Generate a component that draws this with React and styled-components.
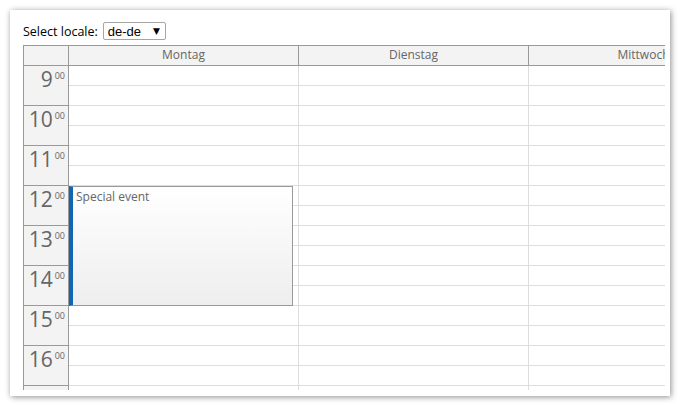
import React, {useState} from 'react'
import styled, {createGlobalStyle} from 'styled-components'

const GlobalStyle = createGlobalStyle`
  * { box-sizing: border-box; }
  body {
    margin: 0;
    background: #fff;
    font-family: "Open Sans", "DejaVu Sans", sans-serif;
  }
`;

const Panel = styled.div`
  margin: 10px;
  width: 660px;
  height: 386px;
  background: #fff;
  box-shadow: 1px 1px 6px rgba(0,0,0,0.45);
  padding: 12px 5px 6px 13px;
  display: flex;
  flex-direction: column;
`;

const Toolbar = styled.div`
  display: flex;
  align-items: center;
  height: 18px;
  margin-bottom: 5px;
  gap: 5px;
  font-size: 12.5px;
  color: #000;
`;

const SelectWrap = styled.div`
  position: relative;
  width: 63px;
  height: 18px;
`;

const Select = styled.select`
  appearance: none;
  width: 100%;
  height: 100%;
  border: 1px solid #a6a6a6;
  border-radius: 2px;
  background: #fff;
  padding: 0 0 0 4px;
  font-family: "Liberation Sans", Arial, sans-serif;
  font-size: 13px;
  color: #000;
  outline: none;
`;

const Arrow = styled.span`
  position: absolute;
  right: 6px;
  top: 3px;
  font-size: 9px;
  line-height: 12px;
  color: #000;
  pointer-events: none;
  font-family: "DejaVu Sans", sans-serif;
`;

const Calendar = styled.div`
  flex: 1;
  overflow: hidden;
  border-left: 1px solid #999;
  border-top: 1px solid #999;
  color: #666;
`;

const Inner = styled.div`
  width: ${props => 45 + props.days * 230}px;
`;

const HeaderRow = styled.div`
  display: flex;
  height: 20px;
`;

const Corner = styled.div`
  width: 45px;
  background: #f3f3f3;
  border-right: 1px solid #999;
  border-bottom: 1px solid #999;
`;

const DayHeader = styled.div`
  width: 230px;
  background: #f3f3f3;
  border-right: 1px solid #999;
  border-bottom: 1px solid #999;
  font-size: 12px;
  line-height: 18px;
  text-align: center;
`;

const Body = styled.div`
  display: flex;
`;

const RowHeaders = styled.div`
  width: 45px;
  background: #f3f3f3;
  border-right: 1px solid #999;
`;

const HourCell = styled.div`
  height: 40px;
  border-bottom: 1px solid #999;
  display: flex;
  justify-content: flex-end;
  padding: 2px 3px 0 0;
`;

const HourNum = styled.span`
  font-size: 21px;
  line-height: 22px;
  color: #666;
`;

const HourMin = styled.span`
  font-size: 9px;
  line-height: 11px;
  margin-left: 2px;
  margin-top: 2px;
  color: #666;
`;

const DayColumn = styled.div`
  position: relative;
  width: 230px;
  border-right: 1px solid #ddd;
`;

const HalfCell = styled.div`
  height: 20px;
  border-bottom: 1px solid #ddd;
`;

const Event = styled.div`
  position: absolute;
  left: 0;
  right: 5px;
  top: ${props => props.top}px;
  height: ${props => props.height}px;
  border: 1px solid #999;
  border-left: 4px solid #1066b3;
  background: linear-gradient(to bottom, #ffffff, #eeeeee);
  font-size: 12px;
  color: #666;
  padding: 1px 3px;
`;

const days = ['Montag', 'Dienstag', 'Mittwoch']
const hours = [9, 10, 11, 12, 13, 14, 15, 16, 17]

const events = [
	{day: 0, start: 12, end: 15, text: 'Special event'}
]

const App = () => {
	const [locale, setLocale] = useState('de-de')

	return(
		<>
			<GlobalStyle />
			<Panel>
				<Toolbar>
					<span>Select locale:</span>
					<SelectWrap>
						<Select value={locale} onChange={e => setLocale(e.target.value)}>
							<option value="de-de">de-de</option>
							<option value="en-us">en-us</option>
							<option value="fr-fr">fr-fr</option>
						</Select>
						<Arrow>▼</Arrow>
					</SelectWrap>
				</Toolbar>
				<Calendar>
					<Inner days={days.length}>
						<HeaderRow>
							<Corner />
							{days.map(d => <DayHeader key={d}>{d}</DayHeader>)}
						</HeaderRow>
						<Body>
							<RowHeaders>
								{hours.map(h => (
									<HourCell key={h}>
										<HourNum>{h}</HourNum>
										<HourMin>00</HourMin>
									</HourCell>
								))}
							</RowHeaders>
							{days.map((d, i) => (
								<DayColumn key={d}>
									{hours.map(h => (
										<React.Fragment key={h}>
											<HalfCell />
											<HalfCell />
										</React.Fragment>
									))}
									{events.filter(ev => ev.day === i).map((ev, k) => (
										<Event key={k} top={(ev.start - 9) * 40} height={(ev.end - ev.start) * 40}>
											{ev.text}
										</Event>
									))}
								</DayColumn>
							))}
						</Body>
					</Inner>
				</Calendar>
			</Panel>
		</>
	)
}

export default App
